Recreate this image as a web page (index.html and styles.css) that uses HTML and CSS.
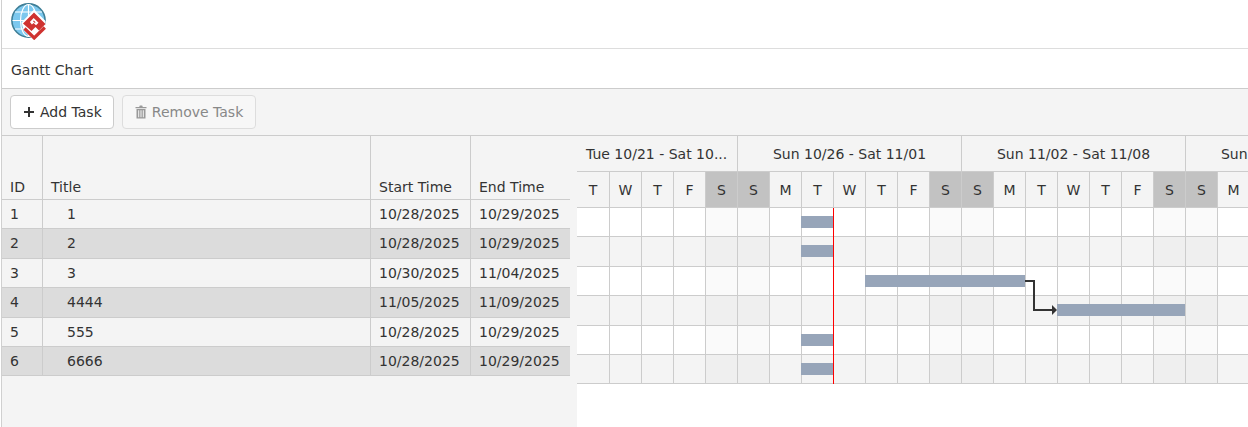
FILE: index.html
```html
<!DOCTYPE html>
<html lang="en">
<head>
<meta charset="utf-8">
<title>Gantt Chart</title>
<link rel="stylesheet" href="styles.css">
</head>
<body>
<div class="shell">
  <header class="brand">
    <svg class="logo" viewBox="0 0 36 37" width="36" height="37" aria-hidden="true">
      <circle cx="17.5" cy="17.5" r="16.6" fill="#7cc8ee" stroke="#3f7f97" stroke-width="1.6"/>
      <g fill="none" stroke="#fff" stroke-width="1.2">
        <ellipse cx="17.5" cy="17.5" rx="8" ry="16"/>
        <path d="M17.5 1.5V33.5M1.5 17.5H33.5M4 9H31M4 26H31"/>
      </g>
      <path d="M13 28L23.2 37.5L35 25.5L34.5 18L23 6.5L10.5 19.5Z" fill="#fff"/>
      <path d="M23 9.5L34.5 21L28 27.5L24.5 24L20.5 28L12 20.5Z" fill="#cf3330"/>
      <path d="M22.7 15L27.5 19.8L25 22.3L22.6 19.9L20.9 21.6L18.9 19.1Z" fill="#fff"/>
      <path d="M22.8 17.4L24.6 19.2L23.8 20L22 18.2Z" fill="#cf3330"/>
      <path d="M13.5 25.5L23.2 35L33.8 24.5" fill="none" stroke="#cf3330" stroke-width="3.2"/>
    </svg>
  </header>
  <h1 class="page-title">Gantt Chart</h1>
  <div class="toolbar">
    <button class="btn" type="button">
      <svg class="btn-icon" viewBox="0 0 12 12" width="12" height="12" aria-hidden="true"><path d="M6 1V11M1 6H11" stroke="#333" stroke-width="2" fill="none"/></svg>
      Add Task
    </button>
    <button class="btn btn-disabled" type="button" disabled>
      <svg class="btn-icon" viewBox="0 0 12 14" width="12" height="14" aria-hidden="true"><path d="M4.2 2L4.8 .6H7.2L7.8 2H11.5V3.2H.5V2ZM1.5 4H10.5V13.4H1.5ZM3.2 5.2V12.2H4.2V5.2ZM5.5 5.2V12.2H6.5V5.2ZM7.8 5.2V12.2H8.8V5.2Z" fill="#999" fill-rule="evenodd"/></svg>
      Remove Task
    </button>
  </div>
  <main class="workspace">
    <section class="task-panel">
      <table class="tasks">
        <colgroup><col class="c-id"><col class="c-title"><col class="c-date"><col class="c-end"></colgroup>
        <thead><tr><th>ID</th><th>Title</th><th>Start Time</th><th>End Time</th></tr></thead>
        <tbody>
          <tr><td>1</td><td class="name">1</td><td>10/28/2025</td><td>10/29/2025</td></tr>
          <tr><td>2</td><td class="name">2</td><td>10/28/2025</td><td>10/29/2025</td></tr>
          <tr><td>3</td><td class="name">3</td><td>10/30/2025</td><td>11/04/2025</td></tr>
          <tr><td>4</td><td class="name">4444</td><td>11/05/2025</td><td>11/09/2025</td></tr>
          <tr><td>5</td><td class="name">555</td><td>10/28/2025</td><td>10/29/2025</td></tr>
          <tr><td>6</td><td class="name">6666</td><td>10/28/2025</td><td>10/29/2025</td></tr>
        </tbody>
      </table>
    </section>
    <section class="chart">
      <div class="weeks">
        <div class="week w5">Tue 10/21 - Sat 10...</div>
        <div class="week w7">Sun 10/26 - Sat 11/01</div>
        <div class="week w7">Sun 11/02 - Sat 11/08</div>
        <div class="week w7">Sun 11/09 - Sat 11/15</div>
      </div>
      <div class="days">
        <div class="day">T</div><div class="day">W</div><div class="day">T</div><div class="day">F</div><div class="day off">S</div>
        <div class="day off">S</div><div class="day">M</div><div class="day">T</div><div class="day">W</div><div class="day">T</div><div class="day">F</div><div class="day off">S</div>
        <div class="day off">S</div><div class="day">M</div><div class="day">T</div><div class="day">W</div><div class="day">T</div><div class="day">F</div><div class="day off">S</div>
        <div class="day off">S</div><div class="day">M</div>
      </div>
      <div class="grid">
        <div class="row"><i></i><i></i><i></i><i></i><i class="off"></i><i class="off"></i><i></i><i></i><i></i><i></i><i></i><i class="off"></i><i class="off"></i><i></i><i></i><i></i><i></i><i></i><i class="off"></i><i class="off"></i><i></i></div>
        <div class="row"><i></i><i></i><i></i><i></i><i class="off"></i><i class="off"></i><i></i><i></i><i></i><i></i><i></i><i class="off"></i><i class="off"></i><i></i><i></i><i></i><i></i><i></i><i class="off"></i><i class="off"></i><i></i></div>
        <div class="row"><i></i><i></i><i></i><i></i><i class="off"></i><i class="off"></i><i></i><i></i><i></i><i></i><i></i><i class="off"></i><i class="off"></i><i></i><i></i><i></i><i></i><i></i><i class="off"></i><i class="off"></i><i></i></div>
        <div class="row"><i></i><i></i><i></i><i></i><i class="off"></i><i class="off"></i><i></i><i></i><i></i><i></i><i></i><i class="off"></i><i class="off"></i><i></i><i></i><i></i><i></i><i></i><i class="off"></i><i class="off"></i><i></i></div>
        <div class="row"><i></i><i></i><i></i><i></i><i class="off"></i><i class="off"></i><i></i><i></i><i></i><i></i><i></i><i class="off"></i><i class="off"></i><i></i><i></i><i></i><i></i><i></i><i class="off"></i><i class="off"></i><i></i></div>
        <div class="row"><i></i><i></i><i></i><i></i><i class="off"></i><i class="off"></i><i></i><i></i><i></i><i></i><i></i><i class="off"></i><i class="off"></i><i></i><i></i><i></i><i></i><i></i><i class="off"></i><i class="off"></i><i></i></div>
        <span class="bar" style="left:224px;top:8px;width:32px"></span>
        <span class="bar" style="left:224px;top:37px;width:32px"></span>
        <span class="bar" style="left:288px;top:67px;width:160px"></span>
        <span class="bar" style="left:480px;top:96px;width:128px"></span>
        <span class="bar" style="left:224px;top:126px;width:32px"></span>
        <span class="bar" style="left:224px;top:155px;width:32px"></span>
        <svg class="link" viewBox="0 0 40 40" width="40" height="40" aria-hidden="true"><path d="M0 1H9V30H28" fill="none" stroke="#333" stroke-width="2"/><path d="M27 25L32 30L27 35Z" fill="#333"/></svg>
        <span class="today"></span>
      </div>
    </section>
  </main>
</div>
</body>
</html>
```
FILE: styles.css
```css
* { box-sizing: border-box; }
html, body { margin: 0; height: 100%; overflow: hidden; background: #fff; }
body { font-family: "DejaVu Sans", sans-serif; font-size: 14px; color: #333; }

.shell { height: 427px; margin-left: 1px; border-left: 1px solid #d0d0d0; display: flex; flex-direction: column; }

.brand { height: 49px; padding: 3px 0 0 9px; border-bottom: 1px solid #ddd; flex: none; }
.logo { display: block; }

.page-title { margin: 0; height: 40px; flex: none; padding-left: 9px; font-size: 14px; font-weight: 400; line-height: 43px; border-bottom: 1px solid #ccc; }

.toolbar { height: 47px; flex: none; padding: 6px 8px; display: flex; gap: 8px; background: #f4f4f4; border-bottom: 1px solid #ccc; }
.btn { height: 34px; padding: 0 11px 0 12px; display: flex; align-items: center; gap: 5px; font: inherit; color: #333; background: #fff; border: 1px solid #ccc; border-radius: 4px; }
.btn-disabled { padding-right: 12px; color: #888; background: #f7f7f7; border-color: #ddd; }
.btn-icon { display: block; flex: none; }

.workspace { flex: 1; display: flex; min-height: 0; }

.task-panel { width: 575px; flex: none; padding-right: 7px; background: #f4f4f4; }
.tasks { width: 568px; table-layout: fixed; border-collapse: separate; border-spacing: 0; }
.c-id { width: 41px; }
.c-title { width: 328px; }
.c-date { width: 100px; }
.c-end { width: 99px; }
.tasks th, .tasks td { padding: 0 8px; font-weight: 400; text-align: left; border-right: 1px solid #ccc; border-bottom: 1px solid #ccc; white-space: nowrap; }
.tasks th:last-child, .tasks td:last-child { border-right: 0; }
.tasks th { height: 64px; vertical-align: bottom; padding-bottom: 3px; line-height: 17px; }
.tasks td { height: 29.4px; padding-top: .5px; line-height: 17px; }
.tasks .name { padding-left: 24px; }
.tasks tbody tr:nth-child(even) td { background: #dcdcdc; }

.chart { flex: 1; min-width: 0; overflow: hidden; }
.weeks { display: flex; height: 36px; background: #f4f4f4; }
.week { flex: none; text-align: center; line-height: 36px; border-right: 1px solid #ccc; border-bottom: 1px solid #ccc; white-space: nowrap; overflow: hidden; }
.w5 { width: 161px; text-align: left; padding-left: 9px; }
.w7 { width: 224px; }
.days { display: flex; height: 36px; background: #f4f4f4; }
.day { flex: none; width: 32px; text-align: center; line-height: 36px; border-right: 1px solid #ccc; border-bottom: 1px solid #ccc; }
.day:first-child { width: 33px; }
.day.off { background: #c2c2c2; }

.grid { position: relative; width: 673px; }
.row { display: flex; height: 29.4px; }
.row i { flex: none; display: block; width: 32px; border-right: 1px solid #ccc; border-bottom: 1px solid #ccc; }
.row i:first-child { width: 33px; }
.row i.off { background: #fafafa; }
.row:nth-child(even) { background: #f4f4f4; }
.row:nth-child(even) i.off { background: #efefef; }

.bar { position: absolute; height: 12px; background: #97a5b9; }
.today { position: absolute; left: 256px; top: 0; width: 1px; height: 176px; background: #f00; }
.link { position: absolute; left: 448px; top: 72px; overflow: visible; }
```
